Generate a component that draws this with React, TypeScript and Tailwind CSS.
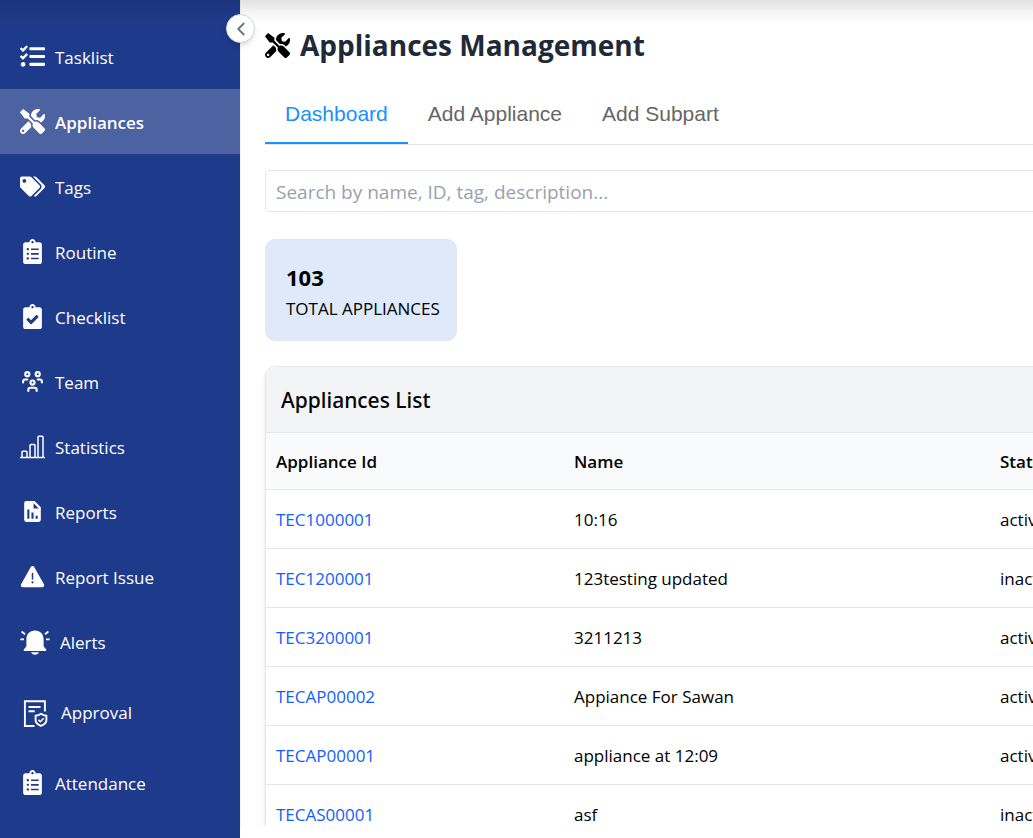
import { useState } from "react"
import type { ReactNode } from "react"
import { FaTasks, FaTools, FaTags, FaClipboardList, FaClipboardCheck } from "react-icons/fa"
import { TbUsersGroup } from "react-icons/tb"
import { BiSolidReport } from "react-icons/bi"
import { ChevronLeft } from "lucide-react"

const StatsIcon = () => (
  <svg width="25" height="25" viewBox="0 0 25 25" fill="none" stroke="currentColor" strokeWidth="1.500">
    <path d="M.7 23.500h23.600" strokeLinecap="round" />
    <path d="M2 23v-4.800c0-.6.4-1 1-1h3c.6 0 1 .4 1 1V23M10 23V11.400c0-.6.4-1 1-1h3c.6 0 1 .4 1 1V23M18 23V3.200c0-.6.4-1 1-1h3c.6 0 1 .4 1 1V23" />
  </svg>
)

const WarningIcon = () => (
  <svg width="25" height="25" viewBox="0 0 25 25">
    <path
      d="M12.500 4 22.200 21.200H2.800z"
      fill="currentColor"
      stroke="currentColor"
      strokeWidth="4"
      strokeLinejoin="round"
    />
    <path d="M12.500 9.500v5.500" stroke="#1e3a8a" strokeWidth="1.500" strokeLinecap="round" />
    <circle cx="12.500" cy="18.300" r="1.100" fill="#1e3a8a" />
  </svg>
)

const BellIcon = () => (
  <svg width="30" height="30" viewBox="0 0 30 30" fill="currentColor">
    <path d="M15 3.500c-5.300 0-8.600 3.700-8.600 8.700v7L3.800 22.400c-.4.700 0 1.500.8 1.500h20.800c.8 0 1.200-.8.800-1.500l-2.600-3.200v-7c0-5-3.300-8.700-8.600-8.700z" />
    <path d="M11 25.200h8c-.6 1.600-2.200 2.500-4 2.500s-3.400-.9-4-2.500z" />
    <path
      d="M5 7.200 1.600 4.500M4 12.400H.4M25 7.200 28.400 4.500M26 12.400h3.600"
      stroke="currentColor"
      strokeWidth="1.800"
    />
  </svg>
)

const ApprovalIcon = () => (
  <svg width="31" height="31" viewBox="0 0 31 31" fill="none" stroke="currentColor" strokeWidth="1.900">
    <path d="M14.500 29H4.900V4.200h20v10.300" />
    <path d="M8.500 10h12M8.500 14.200h6.200" />
    <path d="M21 16.800c1.800 1.300 3.400 1.800 5.400 2v4.500c0 2.700-2.600 4.500-5.400 5.600-2.800-1.100-5.400-2.900-5.400-5.600v-4.500c2-.2 3.600-.7 5.400-2z" />
    <path d="m18.400 22.800 1.900 1.900 3.400-3.500" strokeWidth="1.600" />
  </svg>
)

type MenuItem = { label: string; icon: ReactNode; row?: string }

const menu: MenuItem[] = [
  { label: "Tasklist", icon: <FaTasks size={25} /> },
  { label: "Appliances", icon: <FaTools size={25} /> },
  { label: "Tags", icon: <FaTags size={25} /> },
  { label: "Routine", icon: <FaClipboardList size={25} /> },
  { label: "Checklist", icon: <FaClipboardCheck size={25} /> },
  { label: "Team", icon: <TbUsersGroup size={25} /> },
  { label: "Statistics", icon: <StatsIcon /> },
  { label: "Reports", icon: <BiSolidReport size={25} /> },
  { label: "Report Issue", icon: <WarningIcon /> },
  { label: "Alerts", icon: <BellIcon /> },
  { label: "Approval", icon: <ApprovalIcon />, row: "h-[76px]" },
  { label: "Attendance", icon: <FaClipboardList size={25} /> },
]

const tabs = ["Dashboard", "Add Appliance", "Add Subpart"]

const appliances = [
  { id: "TEC1000001", name: "10:16", status: "active" },
  { id: "TEC1200001", name: "123testing updated", status: "inactive" },
  { id: "TEC3200001", name: "3211213", status: "active" },
  { id: "TECAP00002", name: "Appiance For Sawan", status: "active" },
  { id: "TECAP00001", name: "appliance at 12:09", status: "active" },
  { id: "TECAS00001", name: "asf", status: "inactive" },
]

function Sidebar() {
  return (
    <aside className="relative w-60 shrink-0 bg-[#1e3a8a] pt-6 text-white">
      <nav>
        {menu.map((item) => (
          <a
            key={item.label}
            href="#"
            className={`flex items-center gap-2.5 px-5 text-[17px] ${item.row ?? "h-[65px]"} ${
              item.label === "Appliances" ? "bg-[#4c62a1] font-semibold" : ""
            }`}
          >
            {item.icon}
            <span className="pt-0.5">{item.label}</span>
          </a>
        ))}
      </nav>
      <button
        aria-label="Collapse sidebar"
        className="absolute top-3.5 -right-[15px] z-20 flex size-[29px] items-center justify-center rounded-full border border-gray-300 bg-white text-gray-500 shadow-md"
      >
        <ChevronLeft size={22} />
      </button>
    </aside>
  )
}

export default function App() {
  const [tab, setTab] = useState("Dashboard")
  const [search, setSearch] = useState("")

  return (
    <div className="relative flex h-screen overflow-hidden bg-white font-['Open_Sans','Noto_Sans',sans-serif] text-black">
      <div className="absolute inset-x-0 top-0 z-10 h-6 bg-linear-to-b from-black/12 via-black/4 to-transparent" />
      <Sidebar />

      <main className="mb-3 min-w-0 flex-1 overflow-hidden border-l border-gray-100 pl-6">
        <div className="min-w-[1000px]">
          <h1 className="flex items-center gap-2.5 pt-6 text-[28px] leading-[42px] font-bold text-gray-800">
            <FaTools size={25} className="text-black" />
            Appliances Management
          </h1>

          <div className="mt-[18px] flex border-b border-gray-200 font-['Liberation_Sans',sans-serif] text-[21px]">
            {tabs.map((name) => (
              <button
                key={name}
                onClick={() => setTab(name)}
                className={`h-[60px] border-b-2 px-5 pt-0.5 ${
                  tab === name ? "border-[#1890ff] text-[#1890ff]" : "border-transparent text-[#666]"
                }`}
              >
                {name}
              </button>
            ))}
          </div>

          <input
            type="text"
            aria-label="Search appliances"
            value={search}
            onChange={(e) => setSearch(e.target.value)}
            placeholder="Search by name, ID, tag, description..."
            className="mt-[25px] block h-[42px] w-full rounded border border-gray-200 px-2.5 pt-0.5 text-[19px] placeholder:text-gray-400"
          />

          <div className="mt-[27px] h-[102px] w-48 rounded-[10px] border border-gray-200 bg-[#dee9fa] px-5 pt-[22px]">
            <p className="text-[22px] leading-[30px] font-bold">103</p>
            <p className="text-[17px] leading-[34px] whitespace-nowrap">TOTAL APPLIANCES</p>
          </div>

          <section className="mt-[25px] overflow-hidden rounded-t-[10px] border border-gray-200 shadow-md">
            <h2 className="flex h-[66px] items-center border-b border-gray-200 bg-gray-100 px-[15px] pt-0.5 font-['Noto_Sans','Open_Sans',sans-serif] text-[21px] font-medium">
              Appliances List
            </h2>
            <table className="w-full table-fixed text-left text-[17px]">
              <thead>
                <tr className="h-14 border-b border-gray-200 bg-gray-50">
                  <th className="w-[298px] px-2.5 pt-0.5 font-semibold">Appliance Id</th>
                  <th className="w-[426px] px-2.5 pt-0.5 font-semibold">Name</th>
                  <th className="px-2.5 pt-0.5 font-semibold">Status</th>
                </tr>
              </thead>
              <tbody>
                {appliances.map((item) => (
                  <tr key={item.id} className="h-[59px] border-b border-gray-200">
                    <td className="px-2.5 pt-0.5">
                      <a href="#" className="text-blue-600">
                        {item.id}
                      </a>
                    </td>
                    <td className="px-2.5 pt-0.5">{item.name}</td>
                    <td className="px-2.5 pt-0.5">{item.status}</td>
                  </tr>
                ))}
              </tbody>
            </table>
          </section>
        </div>
      </main>
    </div>
  )
}
